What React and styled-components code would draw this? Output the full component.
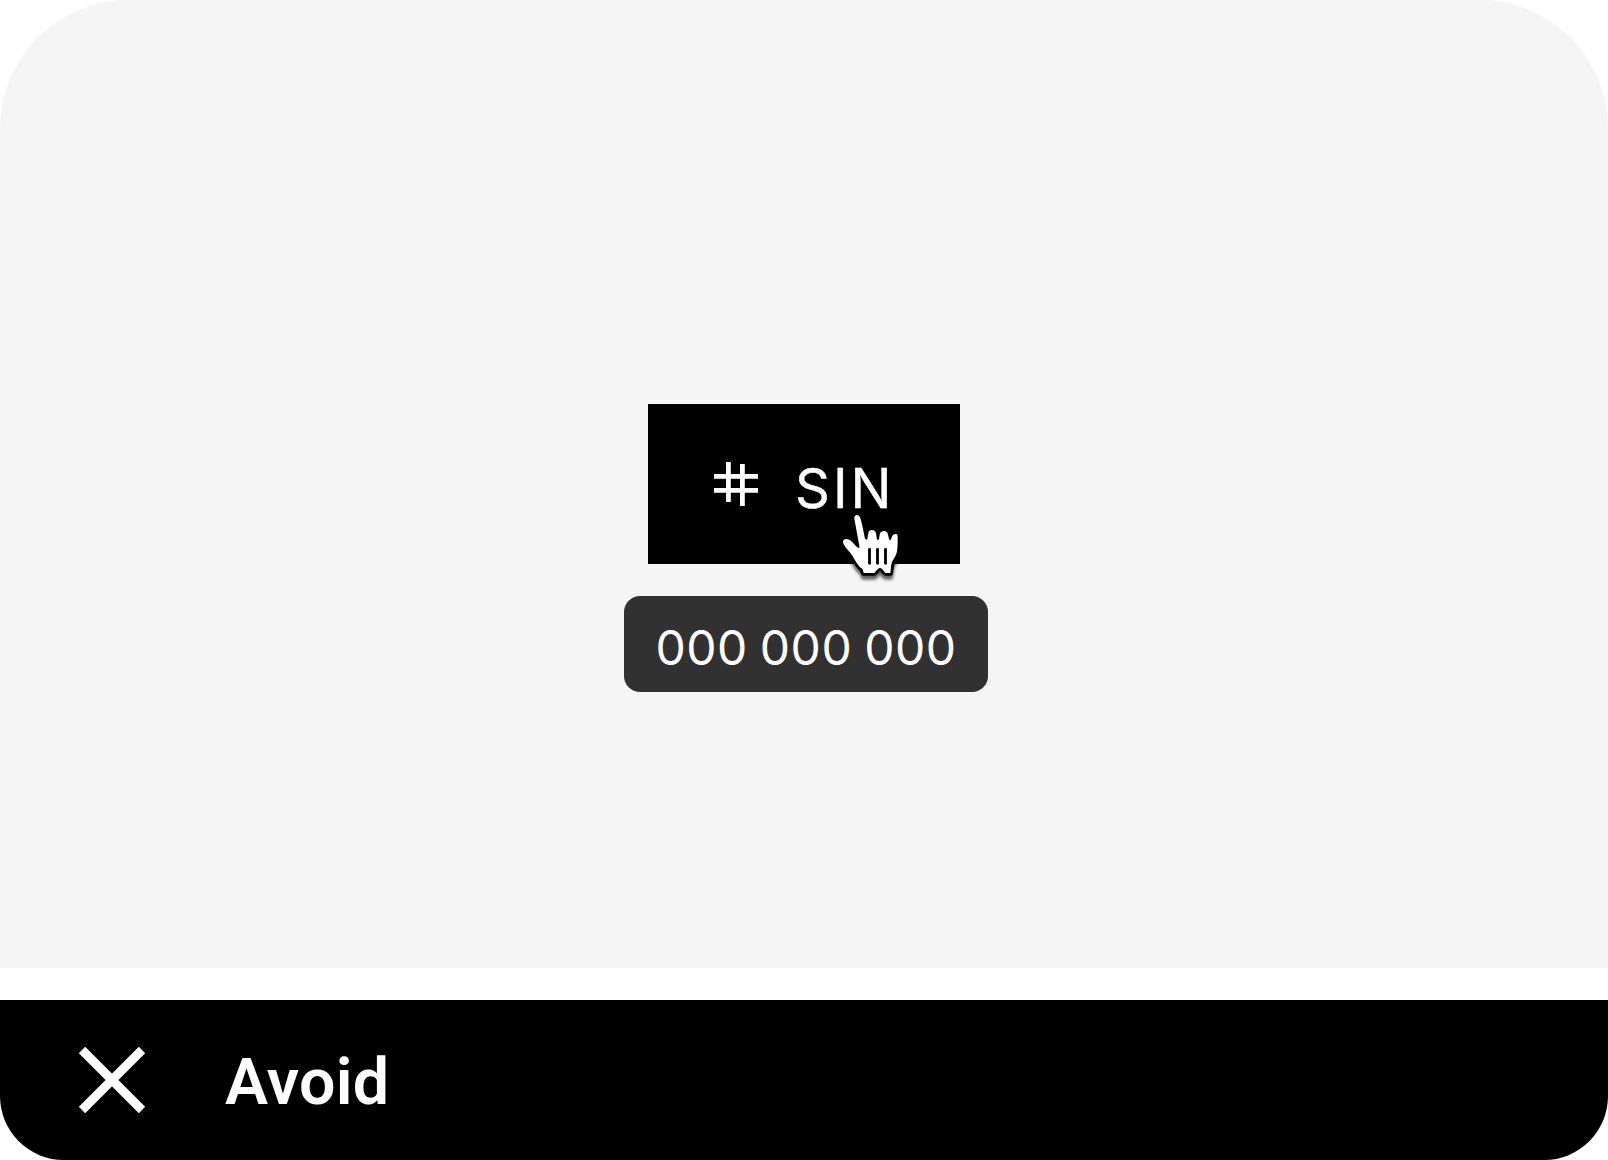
import React from 'react';
import styled, { createGlobalStyle } from 'styled-components';

const GlobalStyle = createGlobalStyle`
  *, *::before, *::after { box-sizing: border-box; }
  body { margin: 0; background: #fff; }
  svg { display: block; }
`;

const Card = styled.article`
  width: 1608px;
  height: 1160px;
  display: flex;
  flex-direction: column;
  gap: 32px;
`;

const Stage = styled.section`
  height: 968px;
  padding-top: 404px;
  display: flex;
  flex-direction: column;
  align-items: center;
  gap: 32px;
  background: #f5f5f5;
  border-radius: 128px 128px 0 0;
`;

const Chip = styled.div`
  position: relative;
  width: 312px;
  height: 160px;
  padding-left: 66px;
  display: flex;
  align-items: center;
  gap: 37px;
  background: #000;
  color: #fff;
`;

const ChipLabel = styled.span`
  padding-top: 8px;
  font: 400 54.4px/64px Inter, sans-serif;
  letter-spacing: 3px;
  -webkit-text-stroke: 0.4px #fff;
`;

const Pointer = styled.svg`
  position: absolute;
  left: 182px;
  top: 96px;
  overflow: visible;
`;

const Tooltip = styled.div`
  width: 364px;
  height: 96px;
  margin-left: 4px;
  padding-top: 8px;
  display: flex;
  align-items: center;
  justify-content: center;
  border-radius: 16px;
  background: #313131;
  color: #fff;
  font: 400 48px/56px Inter, sans-serif;
  letter-spacing: 0.5px;
  word-spacing: -2px;
  white-space: nowrap;
`;

const Verdict = styled.footer`
  height: 160px;
  padding-left: 64px;
  display: flex;
  align-items: center;
  gap: 64px;
  background: #000;
  color: #fff;
  border-radius: 0 0 64px 64px;
`;

const VerdictLabel = styled.strong`
  padding: 4px 0 0 1px;
  font: 600 64.5px/76px Roboto, sans-serif;
  letter-spacing: 0.3px;
`;

const HashIcon = () => (
  <svg width="44" height="44" viewBox="0 0 44 44" fill="currentColor" aria-hidden="true">
    <path d="M12 0h4.8v40H12zM26 2h4.8v42H26zM0 12h44v4.8H0zM0 26h44v4.8H0z" />
  </svg>
);

const CrossIcon = () => (
  <svg width="96" height="96" viewBox="0 0 96 96" stroke="currentColor" strokeWidth="9" aria-hidden="true">
    <path d="M18 18L78 78M78 18L18 78" />
  </svg>
);

const HAND =
  'M73 56C72 49 76 45 81 45C86 45 90 49 92 57C98 78 101 98 104 112C105 118 110 122 112 117L115 99C116 93 120 90 126 90C132 90 136 93 138 99L140 114C141 120 145 122 147 117L149 104C150 97 155 93 162 93C169 93 173 97 174 104L177 117C179 122 182 122 183 117L187 108C189 103 194 101 199 102C203 103 203 109 203 116C203 130 203 143 201 154C199 169 187 180 184 193L181 219H167C161 215 157 204 150 204C143 204 139 215 132 219H101L98 208C84 198 77 184 69 170C61 156 48 147 41 133C36 123 41 116 50 117C66 119 73 137 84 143C88 145 89 142 88 138Z';

const HandPointer = () => (
  <Pointer width="80" height="90" viewBox="0 0 240 270" aria-hidden="true">
    <defs>
      <filter id="pointer-shadow" x="-30%" y="-30%" width="160%" height="160%">
        <feDropShadow dx="0" dy="12" stdDeviation="5" floodColor="#000" floodOpacity="0.6" />
      </filter>
    </defs>
    <path d={HAND} fill="#000" stroke="#000" strokeWidth="17" strokeLinejoin="round" filter="url(#pointer-shadow)" />
    <path d={HAND} fill="#fff" />
    <path d="M118.5 148V190M142.5 148V190M166.5 148V190" stroke="#000" strokeWidth="8.5" strokeLinecap="round" />
  </Pointer>
);

export default function App() {
  return (
    <>
      <GlobalStyle />
      <Card>
        <Stage>
          <Chip>
            <HashIcon />
            <ChipLabel>SIN</ChipLabel>
            <HandPointer />
          </Chip>
          <Tooltip role="tooltip">000 000 000</Tooltip>
        </Stage>
        <Verdict>
          <CrossIcon />
          <VerdictLabel>Avoid</VerdictLabel>
        </Verdict>
      </Card>
    </>
  );
}
